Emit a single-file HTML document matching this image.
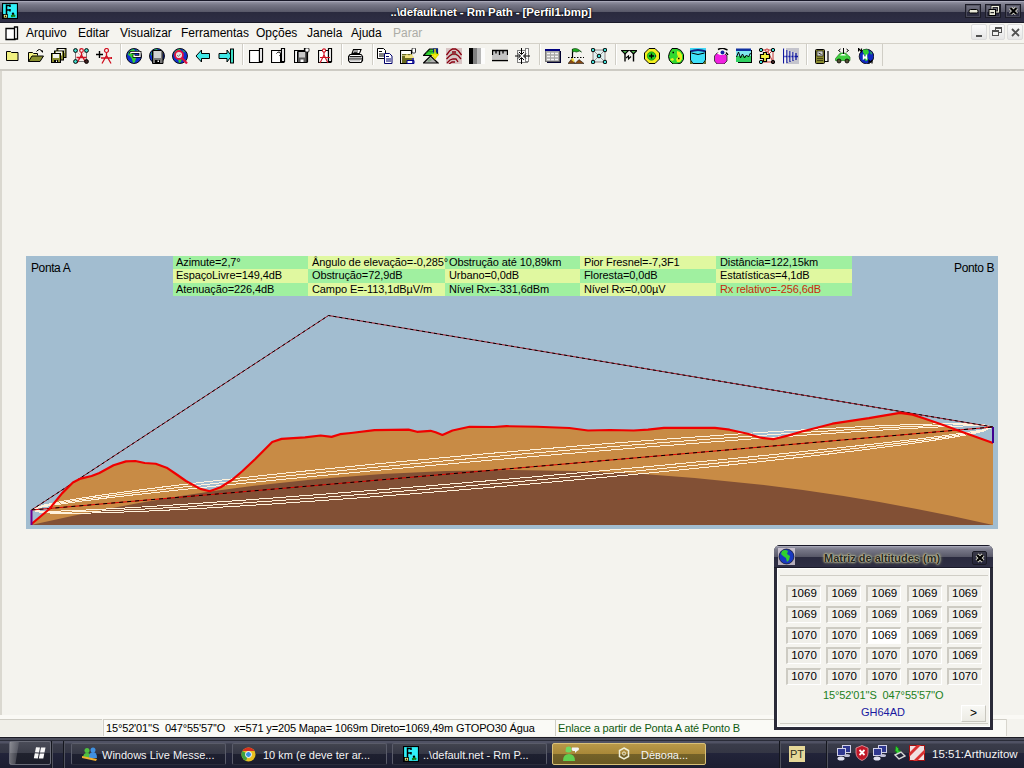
<!DOCTYPE html>
<html><head><meta charset="utf-8"><style>
*{margin:0;padding:0;box-sizing:border-box}
html,body{width:1024px;height:768px;overflow:hidden;background:#F4F3EE;font-family:"Liberation Sans",sans-serif;font-size:11px;color:#000}
.a{position:absolute}
#title{left:0;top:0;width:1024px;height:23px;background:linear-gradient(#181828 0px,#181828 1px,#B4B4C4 1px,#8C8C9C 2.5px,#767686 5px,#5A5A6A 11.5px,#2A2A3E 12px,#2E2E44 21.5px,#1A1A28 22px)}
#title .t{left:0;width:982px;top:5.5px;letter-spacing:-0.1px;text-align:center;color:#fff;font-weight:bold;font-size:11.5px;text-shadow:0 0 2px #000,0 0 1px #000}
.tb{width:16px;height:14px;top:4px;border:1px solid #1a1a24;border-radius:2px;background:linear-gradient(#3a3a48,#24243a)}
#menu{left:0;top:23px;width:1024px;height:21px;background:#F5F4EF;border-bottom:1px solid #D4D1C8}
#menu span{position:absolute;top:3px;font-size:12px;color:#000}
.mb{top:1px;width:16px;height:16px;border:1px solid #DCDCDC;border-radius:2px;background:linear-gradient(#FBFBFB,#E6E6E6)}
#tool{left:0;top:44px;width:1024px;height:27px;background:#F4F3EE;border-bottom:2px solid #CDCBC4}
.sep{top:0px;width:2px;height:21px;border-left:1px solid #D0CEC6;border-right:1px solid #FFF}
.ic{top:4px;width:16px;height:16px}
#mdi{left:0;top:71px;width:1024px;height:644px;background:#F4F3EE;border-left:2px solid #DAD8D0}
#panel{left:26px;top:256px;width:972px;height:273px;background:#A2BDD0;overflow:hidden}
.lbl{font-size:12px;top:5px;letter-spacing:-0.4px}
#tbl{left:147px;top:0;width:679px;height:40px}
#tbl div{position:absolute}
#tbl span{position:absolute;font-size:11px;line-height:13px;white-space:nowrap;letter-spacing:-0.1px;color:#000}
.g{background:#A0F0A0}.y{background:#E0F8A0}
#status{left:0;top:719px;width:1024px;height:18px;background:#F4F3EE}
#status .p{top:0px;height:17px;font-size:11px;padding:2px 0 0 2px;white-space:nowrap;letter-spacing:-0.15px;border-top:1px solid #CFCDC5}
#task{left:0;top:737px;width:1024px;height:31px;background:linear-gradient(#1c1c24 0px,#1c1c24 1px,#4c4e5c 1px,#4c4e5c 3px,#2a2c38 3px,#2a2c38 4px,#505264 4px,#505264 6px,#3a3c4a 7px,#343644 16px,#22243a 16px,#1c1e30 31px)}
.btn{top:6px;height:22px;border:1px solid #5a5c6a;border-bottom-color:#2a2c3a;border-radius:2px;background:linear-gradient(#42444f,#343644 50%,#1e2030 51%,#1a1c2c);color:#F4F4F4;font-size:11px;padding:5px 0 0 30px;white-space:nowrap}
.gold{border-color:#D8C078;background:linear-gradient(#B89848,#A88838 50%,#746228 51%,#6a5a24)}
#mw{left:774px;top:545px;width:219px;height:185px;background:#2a2a38;border-radius:6px 6px 0 0}
#mwt{left:0;top:0;width:219px;height:23px;border-radius:6px 6px 0 0;background:linear-gradient(#181828 0px,#181828 1px,#B4B4C4 1px,#8C8C9C 2.5px,#767686 5px,#5A5A6A 11.5px,#2A2A3E 12px,#2E2E44 21.5px,#1A1A28 22px)}
#mwc{left:3px;top:23px;width:213px;height:159px;background:#F4F3EE;border:1px solid #fff}
.cell{width:35px;height:17px;border-top:2px solid #CDCBC3;border-left:2px solid #CDCBC3;border-bottom:1px solid #fff;border-right:1px solid #fff;background:#F0EFEA;font-size:11.5px;text-align:center;line-height:12px;padding-left:0px}
</style></head><body>
<div id="title" class="a">
<svg class="a" style="left:2px;top:3px" width="16" height="16" viewBox="0 0 16 16"><rect x="0.5" y="0.5" width="15" height="15" fill="#30F0F8" stroke="#000" stroke-width="1.2"/><path d="M4.5 1.5v13M4.5 2.5h3.5M8 1.5v2.5M4.5 7h3.5M8 6v2.5" stroke="#000" stroke-width="1.5"/><rect x="1.5" y="11.5" width="4" height="3.5" fill="#F0F080" stroke="#000" stroke-width=".8"/><circle cx="3.5" cy="13.3" r=".8" fill="#000"/><circle cx="11" cy="10.8" r="1.2" fill="#000"/><circle cx="12.2" cy="12.8" r="1.3" fill="#108010"/><circle cx="10" cy="13" r="1.2" fill="#108010"/></svg>
<div class="t a">..\default.net - Rm Path - [Perfil1.bmp]</div>
<svg class="a" style="left:965px;top:4px" width="57" height="14" viewBox="0 0 57 14">
<g fill="none" stroke="#1c1c28"><rect x="0.5" y="0.5" width="15" height="13"/><rect x="20.5" y="0.5" width="15" height="13"/><rect x="40.5" y="0.5" width="15" height="13"/></g>
<g fill="none" stroke="#50505e" stroke-width=".8"><rect x="1.5" y="1.5" width="13" height="11"/><rect x="21.5" y="1.5" width="13" height="11"/><rect x="41.5" y="1.5" width="13" height="11"/></g>
<rect x="4" y="5.5" width="9" height="3.5" rx="1.5" fill="#E8E8D8" stroke="#000" stroke-width="1"/>
<rect x="27" y="2.5" width="6.5" height="5.5" fill="none" stroke="#000" stroke-width="2.6"/><rect x="27" y="2.5" width="6.5" height="5.5" fill="none" stroke="#F0F0E0" stroke-width="1.2"/>
<rect x="24" y="5.5" width="6.5" height="6" fill="#E8E8D8" stroke="#000" stroke-width="1"/><rect x="25.5" y="8" width="3.5" height="1.2" fill="#303030"/>
<path d="M45.5 4l6 6M51.5 4l-6 6" stroke="#E8E8D8" stroke-width="3.8"/><path d="M45.5 4l6 6M51.5 4l-6 6" stroke="#000" stroke-width="2.2"/>
</svg>
</div>
<div id="menu" class="a">
<svg class="a" style="left:5px;top:3px" width="14" height="15" viewBox="0 0 14 15"><path d="M1 2.5h9v11H1z" fill="#fff" stroke="#000" stroke-width="1.3"/><path d="M9.5 1h3v12h-3z" fill="#fff" stroke="#000" stroke-width="1.3"/></svg>
<span style="left:26px">Arquivo</span><span style="left:78px">Editar</span><span style="left:120px">Visualizar</span><span style="left:181px">Ferramentas</span><span style="left:256px">Opções</span><span style="left:307px">Janela</span><span style="left:351px">Ajuda</span><span style="left:393px;color:#ACACA6">Parar</span>
<div class="a mb" style="left:971px"><div class="a" style="left:4px;top:10px;width:6px;height:2px;background:#505050"></div></div>
<div class="a mb" style="left:989px"><div class="a" style="left:5px;top:2px;width:7px;height:6px;border:1px solid #505050;border-top-width:2px"></div><div class="a" style="left:2px;top:5px;width:7px;height:6px;background:#F0F0F0;border:1px solid #505050;border-top-width:2px"></div></div>
<div class="a mb" style="left:1007px"><svg class="a" style="left:3px;top:3px" width="9" height="9" viewBox="0 0 9 9"><path d="M1 1l7 7M8 1l-7 7" stroke="#505050" stroke-width="1.8"/></svg></div>
</div>
<div id="tool" class="a">
<div class="a sep" style="left:120px"></div><div class="a sep" style="left:242px"></div><div class="a sep" style="left:341px"></div><div class="a sep" style="left:372px"></div><div class="a sep" style="left:539px"></div><div class="a sep" style="left:615px"></div><div class="a sep" style="left:806px"></div><div class="a" style="left:882px;top:0;width:1px;height:22px;background:#D0CEC6"></div>
</div>
<svg class="a" style="left:6px;top:48px" width="16" height="16" viewBox="0 0 16 16"><path d="M0.5 3.5h4l1 1h6.5v8h-11.5z" fill="#F0F080" stroke="#000"/></svg><svg class="a" style="left:28px;top:48px" width="16" height="16" viewBox="0 0 16 16"><path d="M0.5 4.5h4l1 1h4v2" fill="#F0F080" stroke="#000"/><path d="M0.5 4.5v9" stroke="#000"/><path d="M1 5h3.5l1 1h3.5v2H4L1 13z" fill="#F0F080"/><path d="M0.5 13.5l3.5-5.5h11.5l-3.5 5.5z" fill="#8A9030" stroke="#000"/><path d="M8.5 3.5q1.5-2 3-2q1.5 0 2.5 2" fill="none" stroke="#000"/><path d="M12.5 2.5h2.5v2.5z" fill="#000"/></svg><svg class="a" style="left:51px;top:48px" width="16" height="16" viewBox="0 0 16 16"><rect x="6.0" y="0.5" width="9" height="9" fill="#8A8C30" stroke="#000"/><rect x="7.5" y="1" width="6" height="4" fill="#F4F4F0"/><rect x="3.5" y="3.0" width="9" height="9" fill="#8A8C30" stroke="#000"/><rect x="5" y="3.5" width="6" height="4" fill="#F4F4F0"/><rect x="0.5" y="5.5" width="9" height="9" fill="#8A8C30" stroke="#000"/><rect x="2" y="6" width="6" height="4" fill="#F4F4F0"/><rect x="3" y="12" width="4" height="2.5" fill="#000"/><rect x="5" y="12.5" width="1" height="1.5" fill="#fff"/></svg><svg class="a" style="left:73px;top:48px" width="16" height="16" viewBox="0 0 16 16"><path d="M2.5 2.5v11h11V2.5" fill="none" stroke="#606060" stroke-width=".8"/><path d="M2.5 2.5l11 11M13.5 2.5l-11 11" stroke="#D0A0A0" stroke-width=".6"/><circle cx="8.5" cy="2.5" r="1.8" fill="none" stroke="#D01020" stroke-width="1.2"/><path d="M8.5 4.5v3.5M8.5 7l-4.5 8M8.5 7l4.5 8M3.5 9.5h10" stroke="#D01020" stroke-width="1.3"/><g stroke="#000" stroke-width="1"><circle cx="2.5" cy="2.5" r="1.9" fill="#40E0D0"/><circle cx="13.5" cy="2.5" r="1.9" fill="#40E0D0"/><circle cx="2.5" cy="13.5" r="1.9" fill="#40E0D0"/><circle cx="13.5" cy="13.5" r="1.9" fill="#402020"/></g></svg><svg class="a" style="left:96px;top:48px" width="16" height="16" viewBox="0 0 16 16"><path d="M0 6.5h7M3.5 3v7" stroke="#000" stroke-width="1.4"/><circle cx="10.5" cy="2.5" r="2" fill="none" stroke="#D01020" stroke-width="1.2"/><path d="M10.5 4.5v3M10.5 7.5l-4.5 8M10.5 7.5l4.5 8M5 10h10.5M15.5 9v2" stroke="#D01020" stroke-width="1.3"/></svg><svg class="a" style="left:126px;top:48px" width="16" height="16" viewBox="0 0 16 16"><circle cx="8" cy="8" r="7.5" fill="#1030D0" stroke="#000" stroke-width=".9"/><path d="M3 3.5q2-2.5 5-2.5l1 2-2 2 2 2 1 3-1 4-2 1-1-4-2-3-2-1z" fill="#30D030"/><path d="M10 1.5l3 2-1 1z" fill="#30D030"/><path d="M4.5 5.5q0-1.2 1.2-1.2h8.3v4h-6v-1.5" fill="none" stroke="#000" stroke-width="2.8"/><path d="M4.5 5.5q0-1.2 1.2-1.2h8.3v4h-6v-1.5" fill="none" stroke="#fff" stroke-width="1.3"/></svg><svg class="a" style="left:149px;top:48px" width="16" height="16" viewBox="0 0 16 16"><circle cx="8" cy="8" r="7.5" fill="#1030D0" stroke="#000" stroke-width=".9"/><path d="M3 3.5q2-2.5 5-2.5l1 2-2 2 2 2 1 3-1 4-2 1-1-4-2-3-2-1z" fill="#30D030"/><path d="M10 1.5l3 2-1 1z" fill="#30D030"/><path d="M3.5 2.5h9l1.5 1.5v11.5h-10.5z" fill="#787878" stroke="#000"/><rect x="5" y="3" width="7" height="7" fill="#D0D0D0"/><rect x="6" y="12" width="5" height="3" fill="#000"/><rect x="8.5" y="12.5" width="1.5" height="1.5" fill="#fff"/></svg><svg class="a" style="left:172px;top:48px" width="16" height="16" viewBox="0 0 16 16"><circle cx="8" cy="8" r="7.5" fill="#1030D0" stroke="#000" stroke-width=".9"/><path d="M3 3.5q2-2.5 5-2.5l1 2-2 2 2 2 1 3-1 4-2 1-1-4-2-3-2-1z" fill="#30D030"/><path d="M10 1.5l3 2-1 1z" fill="#30D030"/><circle cx="7" cy="7" r="4" fill="#E8E0E0" stroke="#E01040" stroke-width="1.8"/><path d="M5 7l1.5 1.5 2-2.5" stroke="#808080" fill="none"/><path d="M10 10l5 5.5" stroke="#E01040" stroke-width="2.2"/></svg><svg class="a" style="left:195px;top:48px" width="16" height="16" viewBox="0 0 16 16"><path d="M1 8l5.5-6v3.5h8v5h-8v3.5z" fill="#40E8E8" stroke="#000" stroke-width="1" stroke-linejoin="round"/></svg><svg class="a" style="left:218px;top:48px" width="16" height="16" viewBox="0 0 16 16"><path d="M1 5.5h8V2l4.5 6-4.5 6v-3.5H1z" fill="#40E8E8" stroke="#000" stroke-width="1" stroke-linejoin="round"/><rect x="12.5" y="1" width="3" height="14" fill="#40E0C8" stroke="#000"/></svg><svg class="a" style="left:249px;top:48px" width="16" height="16" viewBox="0 0 16 16"><path d="M0.5 2.5h10v12h-10z" fill="#fff" stroke="#000" stroke-width="1.2"/><path d="M10.5 0.5h3v13h-3z" fill="#fff" stroke="#000" stroke-width="1.2"/><path d="M10 14.5h3.5" stroke="#000"/></svg><svg class="a" style="left:271px;top:48px" width="16" height="16" viewBox="0 0 16 16"><path d="M0.5 2.5h10v12h-10z" fill="#fff" stroke="#000" stroke-width="1.2"/><path d="M10.5 0.5h3v13h-3z" fill="#fff" stroke="#000" stroke-width="1.2"/><path d="M10 14.5h3.5" stroke="#000"/><path d="M5.5 5.5q1-1.5 2.5-1.5t1.5 2v8" fill="none" stroke="#000"/><path d="M8 7h3l-1.5 2z" fill="#000"/></svg><svg class="a" style="left:294px;top:48px" width="16" height="16" viewBox="0 0 16 16"><path d="M0.5 2.5h10v12h-10z" fill="#fff" stroke="#000" stroke-width="1.2"/><path d="M10.5 0.5h3v13h-3z" fill="#fff" stroke="#000" stroke-width="1.2"/><path d="M10 14.5h3.5" stroke="#000"/><path d="M3.5 3.5h8.5l1 1v10h-9.5z" fill="#585858" stroke="#000"/><rect x="5" y="4" width="6" height="5.5" fill="#C8C8C8"/><rect x="6.5" y="11.5" width="3" height="2.5" fill="#fff"/><rect x="11" y="0" width="4" height="4" rx="1" fill="#fff" stroke="#000" stroke-width=".8"/></svg><svg class="a" style="left:318px;top:48px" width="16" height="16" viewBox="0 0 16 16"><path d="M0.5 2.5h10v12h-10z" fill="#fff" stroke="#000" stroke-width="1.2"/><path d="M10.5 0.5h3v13h-3z" fill="#fff" stroke="#000" stroke-width="1.2"/><path d="M10 14.5h3.5" stroke="#000"/><circle cx="6" cy="2.5" r="1.6" fill="#fff" stroke="#D01020" stroke-width="1.1"/><path d="M6 4v3M6 7l-4 8M6 7l4 8M2 9.5h10" stroke="#D01020" stroke-width="1.1"/></svg><svg class="a" style="left:348px;top:48px" width="16" height="16" viewBox="0 0 16 16"><path d="M5.5 1.5h7.5l-1.5 4h-7.5z" fill="#fff" stroke="#000" stroke-width="1.1"/><path d="M6 3h4M5.5 4.5h4" stroke="#000" stroke-width=".8"/><path d="M2 6.5h11l1.5 2v4l-1.5 2H2L0.5 12.5v-4z" fill="#fff" stroke="#000" stroke-width="1.2"/><rect x="1.5" y="8.5" width="12" height="2.2" fill="#B8B8B8"/><path d="M1.5 8.5h12M1 11h13" stroke="#000" stroke-width=".9"/><rect x="2" y="12" width="10" height="1.5" fill="#C8C8C8"/><path d="M13 7l1 1M14 10l-1 1M13 13l1-1" stroke="#606060" stroke-width=".8"/></svg><svg class="a" style="left:377px;top:48px" width="16" height="16" viewBox="0 0 16 16"><path d="M0.5 0.5h6l2 2v8h-8z" fill="#fff" stroke="#000"/><path d="M2 3.5h3M2 6h5M2 8h5" stroke="#000"/><path d="M7.5 5.5h5l2.5 2.5v7.5h-7.5z" fill="#fff" stroke="#00006A"/><path d="M9 8.5h3M9 11h5M9 13h5" stroke="#00006A"/></svg><svg class="a" style="left:400px;top:48px" width="16" height="16" viewBox="0 0 16 16"><path d="M0.5 2.5h11v13h-11z" fill="#fff" stroke="#000" stroke-width="1.2"/><rect x="2" y="6" width="10" height="9" fill="#6A6A20"/><path d="M2 7l1 1 1-1 1 1 1-1 1 1 1-1 1 1 1-1" stroke="#C0C080"/><path d="M5 8l2-2 2 2 2-2 3 3v1H5z" fill="#F0E080"/><rect x="12" y="0" width="3.5" height="5" rx="1" fill="#fff" stroke="#000" stroke-width=".8"/><path d="M7 12.5h7v3h-7z" fill="#fff" stroke="#00008A"/><path d="M13 10v6" stroke="#00008A" stroke-width="1.5"/></svg><svg class="a" style="left:423px;top:48px" width="16" height="16" viewBox="0 0 16 16"><path d="M0.5 15l7-7 7.5 7z" fill="#B0B0B0" stroke="#000" stroke-width="1.2"/><path d="M4 13l3-3 2 2-3 2z" fill="#80A080"/><path d="M0.5 7.5l6-6.5h8v6.5z" fill="#30D030" stroke="#000" stroke-width="1.2"/><path d="M3 5l3-2 2 1 3-1" stroke="#108010" fill="none" stroke-width=".8"/><rect x="10" y="0.5" width="5" height="4" fill="#00208A"/><path d="M12 1v6M9 6.5l3 4 3-4z" stroke="#E8E000" fill="#F0F040" stroke-width="1.5"/></svg><svg class="a" style="left:446px;top:48px" width="16" height="16" viewBox="0 0 16 16"><rect x="0" y="0" width="16" height="16" fill="#D8C4C4"/><rect x="4" y="4" width="8" height="4" fill="#B8C8B8"/><path d="M0.5 7l3-4 3-2h3l3 2 3 4M0.5 11l3-3 3-2 3 0 3 2 2.5 3M1 15l3-3 3-1 3 0 2 3M3 16l3-2 3 0M6 4h4" fill="none" stroke="#8A0010" stroke-width="1.3"/></svg><svg class="a" style="left:469px;top:48px" width="16" height="16" viewBox="0 0 16 16"><rect x="0" y="0" width="4" height="16" fill="#000"/><rect x="4" y="0" width="4" height="16" fill="#808080"/><rect x="8" y="0" width="4" height="16" fill="#B8B8B8"/><rect x="12" y="0" width="4" height="16" fill="#FCFCFC"/></svg><svg class="a" style="left:492px;top:48px" width="16" height="16" viewBox="0 0 16 16"><rect x="0" y="3" width="16" height="8" fill="#C4C4C4"/><path d="M0 2.5h16M0.5 2v5M4 2v3.5M7.5 2v5M11 2v3.5M15.5 2v5M0 12.5h16" stroke="#000" stroke-width="1.3"/></svg><svg class="a" style="left:515px;top:48px" width="16" height="16" viewBox="0 0 16 16"><rect x="2.5" y="2.5" width="10" height="12" fill="#F8F8F8" stroke="#808080"/><rect x="10.5" y="0.5" width="3" height="13" fill="#fff" stroke="#808080"/><path d="M6.5 0v6M4 4l2.5 2.5L9 4M6.5 16v-6M4 12l2.5-2.5L9 12M0 8h5M3 5.5L5.5 8 3 10.5M15 8h-6M11 5.5L8.5 8l2.5 2.5" stroke="#000" stroke-width="1" fill="none"/></svg><svg class="a" style="left:545px;top:48px" width="16" height="16" viewBox="0 0 16 16"><rect x="2" y="3" width="14" height="12" fill="#000030"/><rect x="0.5" y="1.5" width="14" height="12" fill="#A8A8A8" stroke="#606060" stroke-width=".8"/><rect x="0" y="1" width="15" height="2" fill="#000080"/><path d="M2 5.5h3M6 5.5h3M10 5.5h3M2 8.5h3M6 8.5h3M10 8.5h3M2 11.5h3M6 11.5h3M10 11.5h3" stroke="#F4F4F4" stroke-width="1.5"/></svg><svg class="a" style="left:568px;top:48px" width="16" height="16" viewBox="0 0 16 16"><path d="M0 15.5l4-5 3 5zM7 15.5l4-4 5 4z" fill="#8A4A10" stroke="#000" stroke-width=".5"/><path d="M3 12l2-2 1 3z" fill="#F0E040"/><path d="M0 9.5h16" stroke="#000" stroke-dasharray="1.5 1.5"/><path d="M4.5 10V1" stroke="#000" stroke-width="1.2"/><path d="M4.5 1q3-1 5 0t4 3l-2-1-3 1q-2-1-4 0z" fill="#20B020" stroke="#104010" stroke-width=".7"/><path d="M4 10.5l2 3" stroke="#F0E040" stroke-width="1.5"/></svg><svg class="a" style="left:591px;top:48px" width="16" height="16" viewBox="0 0 16 16"><rect x="2" y="2" width="12" height="12" fill="#E0F0F0" stroke="#806A6A" stroke-width=".8"/><path d="M2 2l12 12M14 2L2 14" stroke="#806A6A" stroke-width=".7"/><g fill="#40E0D8" stroke="#000" stroke-width="1"><circle cx="2" cy="2" r="1.8"/><circle cx="14" cy="2" r="1.8"/><circle cx="2" cy="14" r="1.8"/><circle cx="14" cy="14" r="1.8"/><circle cx="8" cy="8" r="1.8"/></g></svg><svg class="a" style="left:621px;top:48px" width="16" height="16" viewBox="0 0 16 16"><path d="M0.5 2.5h7l-3.5 3.5z" fill="#50B050" stroke="#000" stroke-width="1.1"/><path d="M9 2.5h7l-3.5 3.5z" fill="#50B050" stroke="#000" stroke-width="1.1"/><path d="M4 5v8.5M12.5 5v8.5" stroke="#000" stroke-width="1.4"/><path d="M5 10l2.5-2v3l2.5-2.5" stroke="#000" fill="none" stroke-width="1.1"/></svg><svg class="a" style="left:644px;top:48px" width="16" height="16" viewBox="0 0 16 16"><path d="M5 0.5h6l4.5 4.5v6l-4.5 4.5H5L0.5 11V5z" fill="#F4F020" stroke="#000" stroke-width="1"/><circle cx="7.5" cy="8" r="4.2" fill="#20D020" stroke="#107010" stroke-width=".6"/><path d="M7.5 5.5v5M5 8h5" stroke="#000" stroke-width="1.3"/><path d="M11 7l1.5 1-1.5 1z" fill="#000080"/></svg><svg class="a" style="left:668px;top:48px" width="16" height="16" viewBox="0 0 16 16"><path d="M4 0.5h5l4 2 2.5 4v5l-2.5 3.5-4 1h-4l-3.5-3.5-1-4 1-4z" fill="#30D830" stroke="#000" stroke-width="1"/><path d="M9 3l3 1 2 3v4l-2 3-3 0-1-3 2-2-1-3z" fill="#E8F020"/><path d="M2 11l2 2 2-1-1-2z" fill="#E8F020"/><path d="M4.5 4.5h1.5M5.2 3.8v1.5M10 10.5h1.5M10.7 9.8v1.5" stroke="#000" stroke-width="1.4"/></svg><svg class="a" style="left:690px;top:48px" width="16" height="16" viewBox="0 0 16 16"><rect x="0" y="0" width="16" height="16" fill="#40E0F8"/><path d="M0 0.5h16v3H0z" fill="#40D0F0"/><path d="M0 2.5q8-3 16 0v2q-8-3-16 0z" fill="#102080"/><path d="M1.5 5q6.5 3 13 0" stroke="#000" fill="none" stroke-width="1"/><path d="M0.5 3v9l2.5 3.5h10l2.5-3.5V3" stroke="#000" fill="none"/><path d="M0 12l3 4H0zM16 12l-3 4h3z" fill="#6A6A20"/></svg><svg class="a" style="left:714px;top:48px" width="16" height="16" viewBox="0 0 16 16"><path d="M3 5h7l3 3v5l-3 3H3L0.5 13V8z" fill="#F020E0" stroke="#202020" stroke-width=".8"/><path d="M3 5.5q4-4 9 0q-4 3-9 0z" fill="#fff"/><circle cx="8.5" cy="4.5" r="2" fill="#1020A0"/><path d="M4 1.5q3-1.5 6-1l3.5 1.5M12 4.5l2 2.5" stroke="#000" fill="none" stroke-width="1.4"/></svg><svg class="a" style="left:736px;top:48px" width="16" height="16" viewBox="0 0 16 16"><rect x="2" y="2" width="14" height="13" fill="#000"/><rect x="0" y="1" width="15" height="13" fill="#30D060"/><rect x="0" y="3" width="15" height="5" fill="#80E8F0"/><rect x="0" y="0.5" width="15" height="2.5" fill="#1030A0"/><path d="M0.5 9l2-5 2 6 2-4 2 4 2-3 2 2 2-4" stroke="#000" fill="none" stroke-width="1"/></svg><svg class="a" style="left:759px;top:48px" width="16" height="16" viewBox="0 0 16 16"><path d="M2 2h12v12H2M8 2l6 12M14 2L2 14" stroke="#C02020" fill="none" stroke-width=".9"/><circle cx="8" cy="2.5" r="1.6" fill="#F0C0C0" stroke="#C02020" stroke-width=".8"/><path d="M3 4.5h3v-2h3v2h3v4h-3v3h-3v-3H3z" transform="translate(-1.5 2)" fill="#F0F040" stroke="#000" stroke-width="1.2"/><g fill="#40E0D8" stroke="#000" stroke-width="1"><circle cx="2" cy="2" r="1.7"/><circle cx="14" cy="2" r="1.7"/><circle cx="2" cy="14" r="1.7"/><circle cx="14" cy="14" r="1.7" fill="#402020"/></g></svg><svg class="a" style="left:783px;top:48px" width="16" height="16" viewBox="0 0 16 16"><rect x="3" y="0" width="13" height="16" fill="#C4C4CC"/><path d="M0.5 0.5v15M0 8.5h15M4 2v13M7 3v11M10 4v9M13 5v7" stroke="#1018A0" stroke-width="1.3"/><path d="M2 1v14M5 2v12M8 3v10M11 4v8" stroke="#fff" stroke-width=".7"/></svg><svg class="a" style="left:815px;top:48px" width="16" height="16" viewBox="0 0 16 16"><rect x="0.5" y="1.5" width="9" height="14" rx="1" fill="#8A8A30" stroke="#000"/><rect x="2" y="3" width="6" height="5" fill="#D0D0C8" stroke="#000" stroke-width=".6"/><path d="M3.5 5l3 1.5" stroke="#000" stroke-width=".8"/><path d="M2.5 10.5h1M4.5 10.5h1M6.5 10.5h1M2.5 12.5h1M4.5 12.5h1M6.5 12.5h1" stroke="#000" stroke-width="1"/><path d="M9.5 13.5h3.5V3" stroke="#000" fill="none" stroke-width="1.2"/></svg><svg class="a" style="left:835px;top:48px" width="16" height="16" viewBox="0 0 16 16"><path d="M0.5 12.5v-2l3-3.5q1-2 3-2h3q2 0 3 2l2.5 2v3.5z" fill="#40D040" stroke="#208020" stroke-width=".7"/><path d="M5 7.5q1-1.5 2-1.5h2q1 0 2 1.5z" fill="#fff"/><circle cx="4" cy="13" r="2" fill="#505030" stroke="#000" stroke-width=".8"/><circle cx="12" cy="13" r="2" fill="#505030" stroke="#000" stroke-width=".8"/><path d="M8.5 0v6M5.5 1l-2 1.5 2 1.5M11.5 1l2 1.5-2 1.5" stroke="#000" fill="none" stroke-width="1"/></svg><svg class="a" style="left:858px;top:48px" width="16" height="16" viewBox="0 0 16 16"><circle cx="8.5" cy="8.5" r="7.3" fill="#1028C0" stroke="#000" stroke-width=".8"/><path d="M5 1.5h5l1 3-2 3 1 4-2 2-2-3 1-3-2-3z" fill="#30D030"/><path d="M12 3l2 2-1 2z" fill="#30D030"/><path d="M5.5 6.5v4l1.5-1.5 1.5 1.5v-4" stroke="#fff" fill="none" stroke-width="1.4"/><path d="M0.5 3.5v-3l3 3v-3M11 15.5v-3l1.5 1.5 1.5-1.5v3" stroke="#000" fill="none" stroke-width="1.2"/></svg>
<div id="mdi" class="a"></div><div class="a" style="left:0;top:715px;width:1024px;height:4px;background:#FAF9F5"></div>
<div id="panel" class="a">
<div class="a lbl" style="left:5px">Ponta A</div>
<div class="a lbl" style="right:4px">Ponto B</div>
<svg class="a" style="left:0;top:0" width="972" height="273" viewBox="26 256 972 273">
<defs><clipPath id="tc"><polygon points="31,525 31.5,524 49.4,509 62,493.4 72.9,482.5 80.7,478.6 91.6,476 99.4,473 113.5,465.3 126,461.4 135.4,461 144.7,463 155.7,463.75 166.6,467.7 176,474 186,481 200.3,488.9 209.7,491.25 220.6,487.3 231.6,480.3 242.5,471 255,459.2 272.2,442 281.6,438.9 305,437.3 320.6,435.5 331.6,436.9 340,434.2 351,433 374.6,430.1 408.5,429.6 417,431.8 430.5,430.8 435.6,432.2 442.4,435 452.5,430.5 469.5,426.75 494,427 506.6,426.2 537,426.75 569.3,428 588,430.5 610,430 633.6,430.5 648,429.6 663.9,427.9 714.9,427.9 729.5,429.7 747.7,433.7 760.4,437.7 773.2,439.2 787.8,435.6 802,431.5 832.4,423.7 868.9,418.2 899.9,412.8 912.6,414.6 923.6,418.2 941.8,424.5 964.4,432.8 993,443 993,525"/></clipPath></defs>
<polygon points="31,525 31.5,524 49.4,509 62,493.4 72.9,482.5 80.7,478.6 91.6,476 99.4,473 113.5,465.3 126,461.4 135.4,461 144.7,463 155.7,463.75 166.6,467.7 176,474 186,481 200.3,488.9 209.7,491.25 220.6,487.3 231.6,480.3 242.5,471 255,459.2 272.2,442 281.6,438.9 305,437.3 320.6,435.5 331.6,436.9 340,434.2 351,433 374.6,430.1 408.5,429.6 417,431.8 430.5,430.8 435.6,432.2 442.4,435 452.5,430.5 469.5,426.75 494,427 506.6,426.2 537,426.75 569.3,428 588,430.5 610,430 633.6,430.5 648,429.6 663.9,427.9 714.9,427.9 729.5,429.7 747.7,433.7 760.4,437.7 773.2,439.2 787.8,435.6 802,431.5 832.4,423.7 868.9,418.2 899.9,412.8 912.6,414.6 923.6,418.2 941.8,424.5 964.4,432.8 993,443 993,525" fill="#C88B45"/>
<path d="M31 525Q512 415 993 525Z" fill="#825035" clip-path="url(#tc)"/>
<polyline points="31.5,510.0 41.5,507.1 51.5,505.4 61.5,503.9 71.6,502.5 81.6,501.1 91.6,499.9 101.6,498.6 111.6,497.4 121.6,496.3 131.7,495.1 141.7,494.0 151.7,492.9 161.7,491.8 171.7,490.7 181.7,489.6 191.8,488.6 201.8,487.5 211.8,486.5 221.8,485.4 231.8,484.4 241.8,483.4 251.8,482.4 261.9,481.4 271.9,480.4 281.9,479.4 291.9,478.5 301.9,477.5 311.9,476.5 322.0,475.6 332.0,474.6 342.0,473.7 352.0,472.7 362.0,471.8 372.0,470.8 382.0,469.9 392.1,469.0 402.1,468.1 412.1,467.2 422.1,466.3 432.1,465.4 442.1,464.5 452.2,463.6 462.2,462.7 472.2,461.8 482.2,460.9 492.2,460.0 502.2,459.2 512.2,458.3 522.3,457.4 532.3,456.6 542.3,455.7 552.3,454.9 562.3,454.0 572.3,453.2 582.4,452.4 592.4,451.5 602.4,450.7 612.4,449.9 622.4,449.1 632.4,448.2 642.5,447.4 652.5,446.6 662.5,445.8 672.5,445.1 682.5,444.3 692.5,443.5 702.5,442.7 712.6,441.9 722.6,441.2 732.6,440.4 742.6,439.7 752.6,438.9 762.6,438.2 772.7,437.4 782.7,436.7 792.7,436.0 802.7,435.3 812.7,434.6 822.7,433.9 832.8,433.2 842.8,432.6 852.8,431.9 862.8,431.3 872.8,430.6 882.8,430.0 892.8,429.4 902.9,428.8 912.9,428.3 922.9,427.7 932.9,427.2 942.9,426.8 952.9,426.4 963.0,426.0 973.0,425.8 983.0,425.8 993.0,427.0" fill="none" stroke="#FFF2DC" stroke-width="1" shape-rendering="crispEdges"/><polyline points="31.5,510.0 41.5,511.2 51.5,511.2 61.5,511.0 71.6,510.6 81.6,510.2 91.6,509.8 101.6,509.3 111.6,508.7 121.6,508.2 131.7,507.6 141.7,507.0 151.7,506.4 161.7,505.7 171.7,505.1 181.7,504.4 191.8,503.8 201.8,503.1 211.8,502.4 221.8,501.7 231.8,501.0 241.8,500.3 251.8,499.6 261.9,498.8 271.9,498.1 281.9,497.3 291.9,496.6 301.9,495.8 311.9,495.1 322.0,494.3 332.0,493.5 342.0,492.7 352.0,491.9 362.0,491.2 372.0,490.4 382.0,489.6 392.1,488.8 402.1,487.9 412.1,487.1 422.1,486.3 432.1,485.5 442.1,484.6 452.2,483.8 462.2,483.0 472.2,482.1 482.2,481.3 492.2,480.4 502.2,479.6 512.2,478.7 522.3,477.8 532.3,477.0 542.3,476.1 552.3,475.2 562.3,474.3 572.3,473.4 582.4,472.5 592.4,471.6 602.4,470.7 612.4,469.8 622.4,468.9 632.4,468.0 642.5,467.1 652.5,466.2 662.5,465.2 672.5,464.3 682.5,463.3 692.5,462.4 702.5,461.4 712.6,460.5 722.6,459.5 732.6,458.5 742.6,457.6 752.6,456.6 762.6,455.6 772.7,454.6 782.7,453.6 792.7,452.6 802.7,451.6 812.7,450.5 822.7,449.5 832.8,448.4 842.8,447.4 852.8,446.3 862.8,445.2 872.8,444.1 882.8,443.0 892.8,441.9 902.9,440.7 912.9,439.6 922.9,438.4 932.9,437.1 942.9,435.9 952.9,434.5 963.0,433.1 973.0,431.6 983.0,429.9 993.0,427.0" fill="none" stroke="#FFF2DC" stroke-width="1" shape-rendering="crispEdges"/><polyline points="31.5,510.0 41.5,506.4 51.5,504.4 61.5,502.7 71.6,501.1 81.6,499.6 91.6,498.2 101.6,496.9 111.6,495.6 121.6,494.3 131.7,493.0 141.7,491.8 151.7,490.6 161.7,489.5 171.7,488.3 181.7,487.2 191.8,486.0 201.8,484.9 211.8,483.8 221.8,482.7 231.8,481.7 241.8,480.6 251.8,479.5 261.9,478.5 271.9,477.5 281.9,476.4 291.9,475.4 301.9,474.4 311.9,473.4 322.0,472.4 332.0,471.5 342.0,470.5 352.0,469.5 362.0,468.5 372.0,467.6 382.0,466.6 392.1,465.7 402.1,464.8 412.1,463.8 422.1,462.9 432.1,462.0 442.1,461.1 452.2,460.2 462.2,459.3 472.2,458.4 482.2,457.5 492.2,456.6 502.2,455.8 512.2,454.9 522.3,454.0 532.3,453.2 542.3,452.3 552.3,451.5 562.3,450.7 572.3,449.8 582.4,449.0 592.4,448.2 602.4,447.4 612.4,446.6 622.4,445.8 632.4,445.0 642.5,444.2 652.5,443.4 662.5,442.6 672.5,441.8 682.5,441.1 692.5,440.3 702.5,439.6 712.6,438.8 722.6,438.1 732.6,437.4 742.6,436.7 752.6,436.0 762.6,435.3 772.7,434.6 782.7,433.9 792.7,433.2 802.7,432.6 812.7,431.9 822.7,431.3 832.8,430.7 842.8,430.1 852.8,429.5 862.8,428.9 872.8,428.4 882.8,427.8 892.8,427.3 902.9,426.9 912.9,426.4 922.9,426.0 932.9,425.6 942.9,425.3 952.9,425.0 963.0,424.9 973.0,424.8 983.0,425.1 993.0,427.0" fill="none" stroke="#FFF2DC" stroke-width="1" shape-rendering="crispEdges"/><polyline points="31.5,510.0 41.5,511.9 51.5,512.2 61.5,512.1 71.6,512.0 81.6,511.7 91.6,511.4 101.6,511.0 111.6,510.6 121.6,510.1 131.7,509.7 141.7,509.2 151.7,508.6 161.7,508.1 171.7,507.5 181.7,506.9 191.8,506.3 201.8,505.7 211.8,505.1 221.8,504.4 231.8,503.8 241.8,503.1 251.8,502.4 261.9,501.7 271.9,501.0 281.9,500.3 291.9,499.6 301.9,498.9 311.9,498.2 322.0,497.4 332.0,496.7 342.0,495.9 352.0,495.2 362.0,494.4 372.0,493.6 382.0,492.8 392.1,492.0 402.1,491.2 412.1,490.4 422.1,489.6 432.1,488.8 442.1,488.0 452.2,487.2 462.2,486.3 472.2,485.5 482.2,484.7 492.2,483.8 502.2,483.0 512.2,482.1 522.3,481.2 532.3,480.4 542.3,479.5 552.3,478.6 562.3,477.7 572.3,476.8 582.4,475.9 592.4,475.0 602.4,474.1 612.4,473.2 622.4,472.2 632.4,471.3 642.5,470.4 652.5,469.4 662.5,468.5 672.5,467.5 682.5,466.5 692.5,465.5 702.5,464.6 712.6,463.6 722.6,462.6 732.6,461.6 742.6,460.6 752.6,459.5 762.6,458.5 772.7,457.5 782.7,456.4 792.7,455.3 802.7,454.3 812.7,453.2 822.7,452.1 832.8,451.0 842.8,449.8 852.8,448.7 862.8,447.5 872.8,446.4 882.8,445.2 892.8,444.0 902.9,442.7 912.9,441.4 922.9,440.1 932.9,438.8 942.9,437.4 952.9,435.9 963.0,434.3 973.0,432.6 983.0,430.6 993.0,427.0" fill="none" stroke="#FFF2DC" stroke-width="1" shape-rendering="crispEdges"/><polyline points="31.5,510.0 41.5,505.7 51.5,503.4 61.5,501.5 71.6,499.7 81.6,498.1 91.6,496.6 101.6,495.1 111.6,493.7 121.6,492.3 131.7,491.0 141.7,489.7 151.7,488.4 161.7,487.1 171.7,485.9 181.7,484.7 191.8,483.5 201.8,482.3 211.8,481.2 221.8,480.0 231.8,478.9 241.8,477.8 251.8,476.7 261.9,475.6 271.9,474.5 281.9,473.5 291.9,472.4 301.9,471.4 311.9,470.3 322.0,469.3 332.0,468.3 342.0,467.3 352.0,466.3 362.0,465.3 372.0,464.3 382.0,463.4 392.1,462.4 402.1,461.5 412.1,460.5 422.1,459.6 432.1,458.7 442.1,457.7 452.2,456.8 462.2,455.9 472.2,455.0 482.2,454.1 492.2,453.2 502.2,452.4 512.2,451.5 522.3,450.6 532.3,449.8 542.3,448.9 552.3,448.1 562.3,447.3 572.3,446.4 582.4,445.6 592.4,444.8 602.4,444.0 612.4,443.2 622.4,442.4 632.4,441.7 642.5,440.9 652.5,440.1 662.5,439.4 672.5,438.6 682.5,437.9 692.5,437.2 702.5,436.5 712.6,435.8 722.6,435.1 732.6,434.4 742.6,433.7 752.6,433.0 762.6,432.4 772.7,431.7 782.7,431.1 792.7,430.5 802.7,429.9 812.7,429.3 822.7,428.7 832.8,428.2 842.8,427.6 852.8,427.1 862.8,426.6 872.8,426.1 882.8,425.7 892.8,425.3 902.9,424.9 912.9,424.5 922.9,424.2 932.9,424.0 942.9,423.8 952.9,423.7 963.0,423.7 973.0,423.9 983.0,424.4 993.0,427.0" fill="none" stroke="#FFF2DC" stroke-width="1" shape-rendering="crispEdges"/><polyline points="31.5,510.0 41.5,512.6 51.5,513.1 61.5,513.3 71.6,513.3 81.6,513.2 91.6,513.0 101.6,512.8 111.6,512.5 121.6,512.1 131.7,511.7 141.7,511.3 151.7,510.9 161.7,510.4 171.7,509.9 181.7,509.4 191.8,508.8 201.8,508.3 211.8,507.7 221.8,507.1 231.8,506.5 241.8,505.9 251.8,505.3 261.9,504.6 271.9,504.0 281.9,503.3 291.9,502.6 301.9,501.9 311.9,501.2 322.0,500.5 332.0,499.8 342.0,499.1 352.0,498.4 362.0,497.6 372.0,496.9 382.0,496.1 392.1,495.3 402.1,494.6 412.1,493.8 422.1,493.0 432.1,492.2 442.1,491.4 452.2,490.6 462.2,489.7 472.2,488.9 482.2,488.1 492.2,487.2 502.2,486.4 512.2,485.5 522.3,484.6 532.3,483.8 542.3,482.9 552.3,482.0 562.3,481.1 572.3,480.2 582.4,479.3 592.4,478.3 602.4,477.4 612.4,476.5 622.4,475.5 632.4,474.6 642.5,473.6 652.5,472.7 662.5,471.7 672.5,470.7 682.5,469.7 692.5,468.7 702.5,467.7 712.6,466.7 722.6,465.6 732.6,464.6 742.6,463.5 752.6,462.5 762.6,461.4 772.7,460.3 782.7,459.2 792.7,458.1 802.7,457.0 812.7,455.8 822.7,454.7 832.8,453.5 842.8,452.3 852.8,451.1 862.8,449.9 872.8,448.6 882.8,447.3 892.8,446.0 902.9,444.7 912.9,443.3 922.9,441.9 932.9,440.4 942.9,438.9 952.9,437.3 963.0,435.5 973.0,433.6 983.0,431.3 993.0,427.0" fill="none" stroke="#FFF2DC" stroke-width="1" shape-rendering="crispEdges"/>
<line x1="31.5" y1="510" x2="993" y2="427" stroke="#E00000" stroke-width="1"/>
<line x1="31.5" y1="510" x2="993" y2="427" stroke="#000" stroke-width="1" stroke-dasharray="4 4"/>
<polyline points="31.5,510 328.5,315.5 993,427" fill="none" stroke="#A01828" stroke-width="1"/>
<polyline points="31.5,510 328.5,315.5 993,427" fill="none" stroke="#000" stroke-width="1" stroke-dasharray="3 3"/>
<polyline points="31.5,524 49.4,509 62,493.4 72.9,482.5 80.7,478.6 91.6,476 99.4,473 113.5,465.3 126,461.4 135.4,461 144.7,463 155.7,463.75 166.6,467.7 176,474 186,481 200.3,488.9 209.7,491.25 220.6,487.3 231.6,480.3 242.5,471 255,459.2 272.2,442 281.6,438.9 305,437.3 320.6,435.5 331.6,436.9 340,434.2 351,433 374.6,430.1 408.5,429.6 417,431.8 430.5,430.8 435.6,432.2 442.4,435 452.5,430.5 469.5,426.75 494,427 506.6,426.2 537,426.75 569.3,428 588,430.5 610,430 633.6,430.5 648,429.6 663.9,427.9 714.9,427.9 729.5,429.7 747.7,433.7 760.4,437.7 773.2,439.2 787.8,435.6 802,431.5 832.4,423.7 868.9,418.2 899.9,412.8 912.6,414.6 923.6,418.2 941.8,424.5 964.4,432.8 993,443" fill="none" stroke="#F00000" stroke-width="2.2" stroke-linejoin="round"/>
<line x1="31.5" y1="510" x2="31.5" y2="525" stroke="#6A0090" stroke-width="2"/>
<line x1="993" y1="427" x2="993" y2="443" stroke="#400090" stroke-width="2"/>
</svg>
<div id="tbl" class="a"><div class="g" style="left:0px;top:0px;width:135px;height:13px"></div><div class="y" style="left:135px;top:0px;width:137px;height:13px"></div><div class="g" style="left:272px;top:0px;width:135px;height:13px"></div><div class="y" style="left:407px;top:0px;width:136px;height:13px"></div><div class="g" style="left:543px;top:0px;width:136px;height:13px"></div><div class="y" style="left:0px;top:13px;width:135px;height:14px"></div><div class="g" style="left:135px;top:13px;width:137px;height:14px"></div><div class="y" style="left:272px;top:13px;width:135px;height:14px"></div><div class="g" style="left:407px;top:13px;width:136px;height:14px"></div><div class="y" style="left:543px;top:13px;width:136px;height:14px"></div><div class="g" style="left:0px;top:27px;width:135px;height:13px"></div><div class="y" style="left:135px;top:27px;width:137px;height:13px"></div><div class="g" style="left:272px;top:27px;width:135px;height:13px"></div><div class="y" style="left:407px;top:27px;width:136px;height:13px"></div><div class="g" style="left:543px;top:27px;width:136px;height:13px"></div><span style="left:3px;top:0px">Azimute=2,7°</span><span style="left:139px;top:0px">Ângulo de elevação=-0,285°</span><span style="left:276px;top:0px">Obstrução até 10,89km</span><span style="left:411px;top:0px">Pior Fresnel=-7,3F1</span><span style="left:547px;top:0px">Distância=122,15km</span><span style="left:3px;top:13px">EspaçoLivre=149,4dB</span><span style="left:139px;top:13px">Obstrução=72,9dB</span><span style="left:276px;top:13px">Urbano=0,0dB</span><span style="left:411px;top:13px">Floresta=0,0dB</span><span style="left:547px;top:13px">Estatísticas=4,1dB</span><span style="left:3px;top:27px">Atenuação=226,4dB</span><span style="left:139px;top:27px">Campo E=-113,1dBµV/m</span><span style="left:276px;top:27px">Nível Rx=-331,6dBm</span><span style="left:411px;top:27px">Nível Rx=0,00µV</span><span style="left:547px;top:27px;color:#C82A08">Rx relativo=-256,6dB</span></div>
</div>
<div id="status" class="a">
<div class="a p" style="left:0;width:102px;background:#F0EFE8"></div>
<div class="a p" style="left:103px;width:452px;background:#FAFAF6;border-left:1px solid #D0CEC6">15°52'01''S&nbsp;&nbsp;047°55'57''O&nbsp;&nbsp;&nbsp;x=571 y=205 Mapa= 1069m Direto=1069,49m GTOPO30 Água</div>
<div class="a p" style="left:555px;width:451px;background:#FAFAF6;color:#105A10;border-left:1px solid #CFCDC5">Enlace a partir de Ponta A até Ponto B</div>
<div class="a p" style="left:1006px;width:18px;border-left:1px solid #D8D6CE;border-top:none"></div>
</div>
<div id="mw" class="a">
<div id="mwt" class="a">
<svg class="a" style="left:4px;top:3px" width="17" height="17" viewBox="0 0 17 17"><rect x="0" y="0" width="17" height="17" fill="#D8D0DC" opacity=".8"/><circle cx="8.5" cy="8.5" r="7.5" fill="#1838C0" stroke="#000" stroke-width=".6"/><path d="M4 3q3-2 6 0l-1 3 3 2-1 4-2 2-1-4-3-2-2-2z" fill="#30D030"/></svg>
<div class="a" style="left:50px;top:6.5px;font-size:11px;font-weight:bold;color:#282820;text-shadow:0 0 1px #C8C8A8,0 0 2px #C0C0A0,0 0 2px #C0C0A0,0 0 3px #A8A888,0 0 4px #909070">Matriz de altitudes (m)</div>
<div class="a tb" style="left:198px;top:6px;width:15px;height:14px"><svg class="a" style="left:2px;top:1px" width="10" height="10" viewBox="0 0 10 10"><path d="M2 2l6 6M8 2l-6 6" stroke="#E0E0D0" stroke-width="4"/><path d="M2 2l6 6M8 2l-6 6" stroke="#000" stroke-width="2.4"/></svg></div>
</div>
<div id="mwc" class="a">
<div class="a" style="left:2px;top:6px;width:208px;height:149px;border-top:1px solid #D0CEC6;border-bottom:1px solid #D0CEC6"></div>
<div class="a cell" style="left:8.0px;top:16.0px">1069</div><div class="a cell" style="left:48.2px;top:16.0px">1069</div><div class="a cell" style="left:88.4px;top:16.0px">1069</div><div class="a cell" style="left:128.6px;top:16.0px">1069</div><div class="a cell" style="left:168.8px;top:16.0px">1069</div><div class="a cell" style="left:8.0px;top:36.8px">1069</div><div class="a cell" style="left:48.2px;top:36.8px">1069</div><div class="a cell" style="left:88.4px;top:36.8px">1069</div><div class="a cell" style="left:128.6px;top:36.8px">1069</div><div class="a cell" style="left:168.8px;top:36.8px">1069</div><div class="a cell" style="left:8.0px;top:57.5px">1070</div><div class="a cell" style="left:48.2px;top:57.5px">1070</div><div class="a cell" style="left:88.4px;top:57.5px;background:#fff">1069</div><div class="a cell" style="left:128.6px;top:57.5px">1069</div><div class="a cell" style="left:168.8px;top:57.5px">1069</div><div class="a cell" style="left:8.0px;top:78.2px">1070</div><div class="a cell" style="left:48.2px;top:78.2px">1070</div><div class="a cell" style="left:88.4px;top:78.2px">1070</div><div class="a cell" style="left:128.6px;top:78.2px">1070</div><div class="a cell" style="left:168.8px;top:78.2px">1069</div><div class="a cell" style="left:8.0px;top:99.0px">1070</div><div class="a cell" style="left:48.2px;top:99.0px">1070</div><div class="a cell" style="left:88.4px;top:99.0px">1070</div><div class="a cell" style="left:128.6px;top:99.0px">1070</div><div class="a cell" style="left:168.8px;top:99.0px">1070</div>
<div class="a" style="left:45px;top:120px;font-size:11px;color:#208020;white-space:nowrap;letter-spacing:-0.1px">15°52'01''S&nbsp;&nbsp;047°55'57''O</div>
<div class="a" style="left:83px;top:137px;font-size:11px;color:#1818A0">GH64AD</div>
<div class="a" style="left:183px;top:136px;width:25px;height:17px;border:1px solid #fff;border-right-color:#C8C6BE;border-bottom-color:#C8C6BE;background:linear-gradient(#F8F8F4,#ECEBE4);font-size:12px;text-align:center;line-height:14px">&gt;</div>
</div>
</div>
<div id="task" class="a">
<div class="a" style="left:9px;top:4px;width:42px;height:24px;border:1px solid #6a6c78;border-radius:2px;background:linear-gradient(#4a4c58,#3c3e4a 48%,#20222e 50%,#1c1e2a)"></div>
<div class="a" style="left:10px;top:5px;width:9px;height:22px;background:linear-gradient(90deg,rgba(255,255,255,.35),rgba(255,255,255,.1));clip-path:polygon(0 0,100% 0,60% 100%,0 100%)"></div>
<svg class="a" style="left:33px;top:9px" width="14" height="14" viewBox="0 0 14 14"><path d="M3 1.2L7 1.5 6 6.5 2 6.2z M8 1.6L12.5 1.4 11.5 6.4 7 6.6z M1.8 7.2L5.8 7.5 4.8 12.5 0.8 12.2z M6.8 7.6L11.3 7.4 10.3 12.4 5.8 12.6z" fill="#F8F8F8"/></svg>
<div class="a" style="left:51px;top:4px;width:2px;height:27px;border-left:1px solid #14161e;border-right:1px solid #50525e"></div>
<div class="a" style="left:63px;top:4px;width:2px;height:27px;border-left:1px solid #14161e;border-right:1px solid #50525e"></div>
<div class="a btn" style="left:71px;width:155px">Windows Live Messe...</div>
<div class="a btn" style="left:232px;width:155px">10 km (e deve ter ar...</div>
<div class="a btn" style="left:392px;width:155px">..\default.net - Rm P...</div>
<div class="a btn gold" style="left:552px;width:154px;padding-left:88px">Dėвояa...</div>
<svg class="a" style="left:82px;top:10px" width="16" height="14" viewBox="0 0 16 14"><circle cx="5" cy="3.5" r="2.5" fill="#50C040"/><circle cx="11" cy="3" r="2.5" fill="#4090E0"/><path d="M1 11q0-5 4-5t4 5z" fill="#50C040"/><path d="M7 11q0-6 4-6t4 6z" fill="#4090E0"/><path d="M0 9l15 3-1 2L0 11z" fill="#F0B030"/></svg>
<svg class="a" style="left:241px;top:10px" width="15" height="15" viewBox="0 0 15 15"><circle cx="7.5" cy="7.5" r="7" fill="#E8C020"/><path d="M7.5.5A7 7 0 0 1 13.6 4H7.5z M1.4 4A7 7 0 0 1 7.5.5V4z" fill="#D83020"/><path d="M1.4 4A7 7 0 0 0 5 14L7.5 7.5z" fill="#40A040"/><circle cx="7.5" cy="7.5" r="3" fill="#3890E0" stroke="#fff" stroke-width="1"/></svg>
<svg class="a" style="left:403px;top:9px" width="16" height="16" viewBox="0 0 16 16"><rect x="0.5" y="0.5" width="15" height="15" fill="#30F0F8" stroke="#000" stroke-width="1.2"/><path d="M4.5 1.5v13M4.5 2.5h3.5M8 1.5v2.5M4.5 7h3.5M8 6v2.5" stroke="#000" stroke-width="1.5"/><rect x="1.5" y="11.5" width="4" height="3.5" fill="#F0F080" stroke="#000" stroke-width=".8"/><circle cx="3.5" cy="13.3" r=".8" fill="#000"/><circle cx="11" cy="10.8" r="1.2" fill="#000"/><circle cx="12.2" cy="12.8" r="1.3" fill="#108010"/><circle cx="10" cy="13" r="1.2" fill="#108010"/></svg>
<svg class="a" style="left:562px;top:9px" width="18" height="16" viewBox="0 0 18 16"><path d="M4 1.5q3-2 5 0l.5 4q-3 2-6 0z" fill="#70D860"/><path d="M1 15q0-7 6-7t6 7z" fill="#60D050"/><path d="M10 1.5h6q1 0 1 1.5t-2 2l-2 2v-2h-2q-2-1-1-3.5z" fill="#F4F4F4"/></svg>
<svg class="a" style="left:618px;top:10px" width="12" height="13" viewBox="0 0 12 13"><path d="M6 1l4.5 2.5v6L6 12 1.5 9.5v-6z" fill="none" stroke="#F0F0D8" stroke-width="1.5"/><circle cx="6" cy="6.5" r="1.6" fill="none" stroke="#F0F0D8" stroke-width="1"/></svg>
<div class="a" style="left:779px;top:4px;width:2px;height:27px;border-left:1px solid #14161e;border-right:1px solid #50525e"></div>
<div class="a" style="left:789px;top:9px;width:16px;height:16px;background:#E6D898;font-size:11px;color:#303020;text-align:center;line-height:16px">PT</div>
<div class="a" style="left:826px;top:4px;width:2px;height:27px;border-left:1px solid #14161e;border-right:1px solid #50525e"></div>
<svg class="a" style="left:836px;top:8px" width="16" height="16" viewBox="0 0 16 16"><rect x="6.5" y="0.5" width="8" height="7" fill="#303890" stroke="#D0D0E8"/><rect x="1.5" y="3.5" width="8" height="7" fill="#303890" stroke="#D0D0E8"/><ellipse cx="5" cy="13.5" rx="3.5" ry="2" fill="#E0E0F0"/><ellipse cx="11" cy="10.5" rx="3" ry="1.5" fill="#C0C0D8"/></svg>
<svg class="a" style="left:855px;top:8px" width="14" height="16" viewBox="0 0 14 16"><path d="M7 .5l6 2.5v5q0 5-6 7.5Q1 13 1 8V3z" fill="#C01828" stroke="#E8A0A8" stroke-width=".8"/><path d="M4.5 5l5 5M9.5 5l-5 5" stroke="#fff" stroke-width="1.8"/></svg>
<svg class="a" style="left:872px;top:8px" width="16" height="16" viewBox="0 0 16 16"><rect x="6.5" y="0.5" width="8" height="7" fill="#303890" stroke="#D0D0E8"/><rect x="1.5" y="3.5" width="8" height="7" fill="#303890" stroke="#D0D0E8"/><ellipse cx="5" cy="13.5" rx="3.5" ry="2" fill="#E0E0F0"/><ellipse cx="11" cy="10.5" rx="3" ry="1.5" fill="#C0C0D8"/></svg>
<svg class="a" style="left:891px;top:8px" width="15" height="15" viewBox="0 0 15 15"><path d="M5 1l3 3-1 1 3 1-4 3-1-3-1 1z" fill="#30D030" stroke="#108010" stroke-width=".6"/><path d="M4 10l6-3 4 4-6 3z" fill="none" stroke="#D8D8D8" stroke-width="1.4"/></svg>
<svg class="a" style="left:909px;top:8px" width="16" height="16" viewBox="0 0 16 16"><rect x="0.5" y="0.5" width="15" height="15" fill="#F0E0E0" stroke="#A01010"/><path d="M0 8L8 0h4L0 12zM4 16L16 4v4L8 16z" fill="#D83030"/></svg>
<div class="a" style="left:932px;top:10.5px;color:#F4F4F4;font-size:11.5px;white-space:nowrap">15:51:Arthuzitow</div>
</div>
</body></html>
